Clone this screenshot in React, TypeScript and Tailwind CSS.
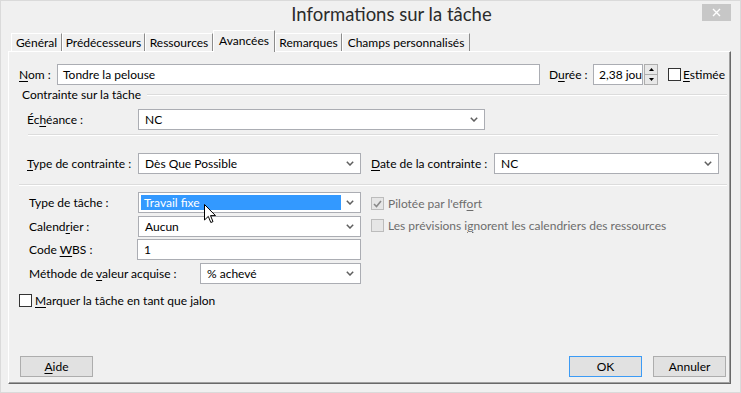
import React from 'react';

function U({ children }: { children: React.ReactNode }) {
  return <span className="underline decoration-1 underline-offset-[2px]">{children}</span>;
}

function Chevron() {
  return (
    <svg width="8" height="5" viewBox="0 0 8 5" className="shrink-0">
      <path d="M0.8 0.8 L4 4 L7.2 0.8" stroke="#5f5f5f" strokeWidth="1.5" fill="none" />
    </svg>
  );
}

function Combo({ value, className, selected }: { value: string; className: string; selected?: boolean }) {
  return (
    <div className={`flex h-[21px] items-center border border-[#abadb3] bg-white pr-[6px] ${className}`}>
      {selected ? (
        <div className="ml-[2px] mr-[5px] flex h-[15px] flex-1 items-center bg-[#3399ff] pl-[3px] text-white">{value}</div>
      ) : (
        <div className="flex-1 pl-[6px]">{value}</div>
      )}
      <Chevron />
    </div>
  );
}

function TextBox({ value, className }: { value: string; className: string }) {
  return (
    <div className={`flex h-[21px] items-center overflow-hidden whitespace-nowrap border border-[#abadb3] bg-white pl-[5px] ${className}`}>
      {value}
    </div>
  );
}

function CheckBox({ checked, disabled }: { checked?: boolean; disabled?: boolean }) {
  return (
    <div
      className={`flex h-[13px] w-[13px] shrink-0 items-center justify-center border ${
        disabled ? 'border-[#bcbcbc] bg-[#e6e6e6]' : 'border-[#333333] bg-white'
      }`}
    >
      {checked && (
        <svg width="9" height="8" viewBox="0 0 9 8">
          <path d="M1 4 L3.5 6.5 L8 1" stroke={disabled ? '#8a8a8a' : '#222'} strokeWidth="1.6" fill="none" />
        </svg>
      )}
    </div>
  );
}

function Button({ label, primary }: { label: React.ReactNode; primary?: boolean }) {
  return (
    <div
      className={`flex h-[21px] w-[73px] items-center justify-center border bg-[#e1e1e1] ${
        primary ? 'border-[#3c9bf5]' : 'border-[#adadad]'
      }`}
    >
      {label}
    </div>
  );
}

const tabs = [
  { label: 'Général', w: 'w-[51px]' },
  { label: 'Prédécesseurs', w: 'w-[83px]' },
  { label: 'Ressources', w: 'w-[68px]' },
  { label: 'Avancées', w: 'w-[62px]', active: true },
  { label: 'Remarques', w: 'w-[67px]' },
  { label: 'Champs personnalisés', w: 'w-[128px]' },
];

export default function App() {
  return (
    <div className="relative h-[393px] w-[741px] overflow-hidden border border-[#dadada] bg-[#f0f0f0] font-['Lato','Liberation_Sans',sans-serif] text-[12px] leading-none text-black">
      {/* title bar */}
      <div className="flex h-[30px] items-center justify-center pb-[3px] pl-[42px] text-[18.5px] text-[#2b2b2b]">
        Informations sur la tâche
      </div>
      <div className="absolute right-[9px] top-[3px] flex h-[17px] w-[29px] items-center justify-center bg-[#c7c7c7]">
        <svg width="9" height="9" viewBox="0 0 9 9">
          <path d="M1 1 L8 8 M8 1 L1 8" stroke="#fff" strokeWidth="1.4" />
        </svg>
      </div>

      {/* tabs */}
      <div className="ml-[10px] flex h-[20px] items-end">
        {tabs.map((t) =>
          t.active ? (
            <div
              key={t.label}
              className={`relative z-10 -mb-[1px] flex h-[22px] items-start justify-center border-l border-t border-r border-l-white border-t-white border-r-[#8c8c8c] bg-[#f0f0f0] pt-[4px] ${t.w}`}
            >
              {t.label}
            </div>
          ) : (
            <div
              key={t.label}
              className={`flex h-[18px] items-center justify-center border-l border-t border-r border-l-white border-t-white border-r-[#8c8c8c] ${t.w}`}
            >
              {t.label}
            </div>
          )
        )}
      </div>

      {/* panel */}
      <div className="ml-[7px] flex h-[333px] w-[723px] flex-col border border-l-white border-t-white border-r-[#696969] border-b-[#696969] shadow-[inset_-1px_-1px_0_#a0a0a0]">
        {/* Nom row */}
        <div className="mt-[12px] flex h-[21px] items-center pl-[10px]">
          <div className="w-[38px]">
            <U>N</U>om :
          </div>
          <TextBox value="Tondre la pelouse" className="w-[483px]" />
          <div className="ml-[9px] w-[44px]">
            D<U>u</U>rée :
          </div>
          <TextBox value="2,38 jou" className="w-[50px]" />
          <div className="ml-[1px] flex h-[21px] w-[14px] flex-col">
            <div className="flex flex-1 items-center justify-center border border-[#adadad] bg-[#e8e8e8]">
              <svg width="5" height="3" viewBox="0 0 5 3">
                <path d="M0 3 L2.5 0 L5 3 Z" fill="#000" />
              </svg>
            </div>
            <div className="flex flex-1 items-center justify-center border border-t-0 border-[#adadad] bg-[#e8e8e8]">
              <svg width="5" height="3" viewBox="0 0 5 3">
                <path d="M0 0 L2.5 3 L5 0 Z" fill="#000" />
              </svg>
            </div>
          </div>
          <div className="ml-[10px]">
            <CheckBox />
          </div>
          <div className="ml-[2px]">
            <U>E</U>stimée
          </div>
        </div>

        {/* group header */}
        <div className="mt-[3px] flex h-[14px] items-center pl-[13px]">
          <span>Contrainte sur la tâche</span>
          <div className="ml-[6px] mr-[3px] h-[2px] flex-1 border-t border-b border-t-[#dcdcdc] border-b-white" />
        </div>

        {/* Échéance */}
        <div className="mt-[7px] flex h-[21px] items-center pl-[18px]">
          <div className="w-[111px]">
            Éc<U>h</U>éance :
          </div>
          <Combo value="NC" className="w-[347px]" />
        </div>

        <div className="ml-[19px] mt-[4px] h-[2px] w-[690px] border-t border-b border-t-[#dcdcdc] border-b-white" />

        {/* Type de contrainte */}
        <div className="mt-[17px] flex h-[21px] items-center pl-[18px]">
          <div className="w-[111px]">
            <U>T</U>ype de contrainte :
          </div>
          <Combo value="Dès Que Possible" className="w-[223px]" />
          <div className="ml-[10px] w-[123px]">
            <U>D</U>ate de la contrainte :
          </div>
          <Combo value="NC" className="w-[225px]" />
        </div>

        <div className="ml-[10px] mt-[10px] h-[2px] w-[708px] border-t border-b border-t-[#dcdcdc] border-b-white" />

        {/* task block */}
        <div className="mt-[6px] flex">
          <div className="flex w-[352px] flex-col pl-[20px]">
            <div className="flex h-[21px] items-center">
              <div className="w-[109px]">Type de tâche :</div>
              <Combo value="Travail fixe" className="w-[223px]" selected />
            </div>
            <div className="mt-[3px] flex h-[21px] items-center">
              <div className="w-[109px]">
                Calend<U>r</U>ier :
              </div>
              <Combo value="Aucun" className="w-[223px]" />
            </div>
            <div className="mt-[2px] flex h-[21px] items-center">
              <div className="w-[108px]">
                Code <U>W</U>BS :
              </div>
              <TextBox value="1" className="w-[224px] pl-[6px]" />
            </div>
            <div className="mt-[3px] flex h-[21px] items-center">
              <div className="w-[171px]">
                Méthode de <U>v</U>aleur acquise :
              </div>
              <Combo value="% achevé" className="w-[161px]" />
            </div>
          </div>
          <div className="ml-[10px] flex flex-col text-[#6d6d6d]">
            <div className="mt-[5px] flex h-[13px] items-center">
              <CheckBox checked disabled />
              <span className="ml-[4px]">
                Pilotée par l'eff<U>o</U>rt
              </span>
            </div>
            <div className="mt-[9px] flex h-[13px] items-center">
              <CheckBox disabled />
              <span className="ml-[4px]">
                Les prévisions i<U>g</U>norent les calendriers des ressources
              </span>
            </div>
          </div>
        </div>

        {/* jalon */}
        <div className="mt-[10px] flex h-[13px] items-center pl-[10px]">
          <CheckBox />
          <span className="ml-[3px]">
            <U>M</U>arquer la tâche en tant que jalon
          </span>
        </div>

        {/* buttons */}
        <div className="mb-[6px] mt-auto flex h-[21px] pl-[11px] pr-[4px]">
          <Button
            label={
              <span>
                <U>A</U>ide
              </span>
            }
          />
          <div className="flex-1" />
          <Button label="OK" primary />
          <div className="ml-[11px]">
            <Button label="Annuler" />
          </div>
        </div>
      </div>

      {/* mouse pointer */}
      <svg className="absolute left-[203px] top-[203px]" width="12" height="20" viewBox="0 0 12 20">
        <path d="M0.5 0.5 L0.5 16 L4.3 12.4 L6.8 18.5 L9 17.6 L6.5 11.6 L11.5 11.6 Z" fill="#fff" stroke="#000" strokeWidth="1" />
      </svg>
    </div>
  );
}
